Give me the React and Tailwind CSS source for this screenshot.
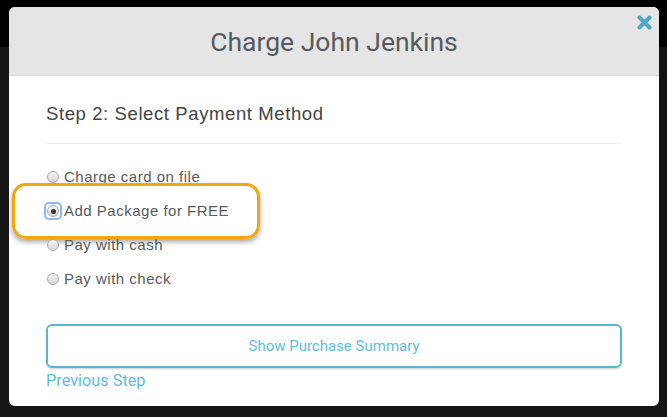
import React from "react";

function Radio({ checked }) {
  return (
    <span className={"relative flex h-[14px] w-[14px] items-center justify-center " + (checked ? "rounded-[3px] ring-2 ring-[#8fb4f5]" : "")}>
      <span className="flex h-[12px] w-[12px] items-center justify-center rounded-full border border-[#a9a9a9] bg-gradient-to-b from-[#f4f4f4] to-[#d8d8d8]">
        {checked && <span className="h-[5px] w-[5px] rounded-full bg-[#333]" />}
      </span>
    </span>
  );
}

export default function App() {
  const options = [
    "Charge card on file",
    "Add Package for FREE",
    "Pay with cash",
    "Pay with check",
  ];
  return (
    <div className="relative h-[417px] w-[667px] overflow-hidden bg-[#141414] font-['Liberation_Sans',Arial,sans-serif]">
      <div className="h-[47px] bg-black" />
      <div className="absolute left-[9px] top-[7px] flex h-[399px] w-[650px] flex-col overflow-hidden rounded-[6px] bg-white">
        <div className="relative flex h-[69px] items-center justify-center border-b border-[#d9d9d9] bg-[#e5e5e5]">
          <h1 className="pt-[2px] font-['Roboto',sans-serif] text-[26.5px] text-[#555a5e]">Charge John Jenkins</h1>
          <svg className="absolute right-[7px] top-[8px]" width="15" height="15" viewBox="0 0 15 15">
            <path d="M2.5 2.5 L12.5 12.5 M12.5 2.5 L2.5 12.5" stroke="#4ea9c2" strokeWidth="4" strokeLinecap="round" />
          </svg>
        </div>
        <div className="flex flex-col px-[37px]">
          <h2 className="mt-[27px] text-[18.5px] leading-[22px] tracking-[0.6px] text-[#444]">Step 2: Select Payment Method</h2>
          <div className="mt-[18px] h-px bg-[#eeeeee]" />
          <div className="mt-[16px] flex flex-col">
            {options.map((o, i) => (
              <div key={o} className="relative flex h-[34px] items-center gap-[5px]">
                {i === 1 && (
                  <div className="absolute left-[-34px] top-[-11px] h-[56px] w-[248px] rounded-[14px] border-[3px] border-[#f1a70e] shadow-[0_3px_5px_rgba(0,0,0,0.35)]" />
                )}
                <div className="relative flex items-center gap-[4px]">
                  <Radio checked={i === 1} />
                  <span className="text-[15px] tracking-[0.5px] text-[#5a5a5a]">{o}</span>
                </div>
              </div>
            ))}
          </div>
          <button className="mt-[28px] flex h-[44px] items-center justify-center rounded-[6px] border-2 border-[#56b8cf] font-['Roboto',sans-serif] text-[15px] text-[#5bc0de] shadow-[0_1px_2px_rgba(0,0,0,0.2)]">
            Show Purchase Summary
          </button>
          <a className="mt-[3px] font-['Roboto',sans-serif] text-[16.3px] leading-[20px] text-[#5bc0de]">Previous Step</a>
        </div>
      </div>
    </div>
  );
}
